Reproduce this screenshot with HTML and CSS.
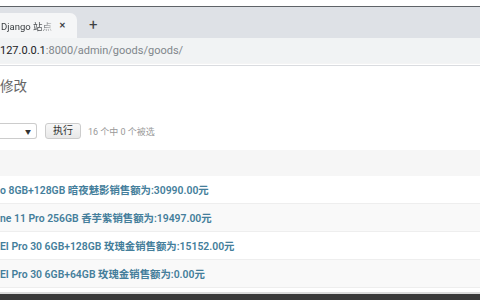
FILE: index.html
```html
<!DOCTYPE html>
<html>
<head>
<meta charset="utf-8">
<link rel="stylesheet" href="styles.css">
</head>
<body>
<div class="screen">
  <div class="topgap"></div>
  <div class="tabstrip">
    <div class="tab">
      <span class="tab-title">Django 站点</span>
      <span class="tab-close">✕</span>
    </div>
    <span class="newtab">+</span>
  </div>
  <div class="toolbar">
    <span class="url"><span class="host">127.0.0.1</span>:8000/admin/goods/goods/</span>
  </div>
  <div class="sep"></div>
  <div class="content">
    <h1 class="title">修改</h1>
    <div class="actions">
      <div class="select"><span class="caret">▼</span></div>
      <button class="go">执行</button>
      <span class="counter">16 个中 0 个被选</span>
    </div>
    <div class="table">
      <div class="thead"></div>
      <div class="row"><a class="link">o 8GB+128GB 暗夜魅影销售额为:30990.00元</a></div>
      <div class="row alt"><a class="link">ne 11 Pro 256GB 香芋紫销售额为:19497.00元</a></div>
      <div class="row"><a class="link">EI Pro 30 6GB+128GB 玫瑰金销售额为:15152.00元</a></div>
      <div class="row alt"><a class="link">EI Pro 30 6GB+64GB 玫瑰金销售额为:0.00元</a></div>
    </div>
  </div>
  <div class="bottomline"></div>
  <div class="taskbar"></div>
</div>
</body>
</html>
```
FILE: styles.css
```css
html, body {
  margin: 0;
  padding: 0;
  background: #fff;
}
.screen {
  width: 480px;
  height: 300px;
  overflow: hidden;
  display: flex;
  flex-direction: column;
  font-family: Roboto, "Noto Sans CJK SC", sans-serif;
}
.topgap {
  height: 6px;
  background: #fff;
  border-bottom: 1px solid #5f6368;
  flex: none;
}
.tabstrip {
  height: 31px;
  background: #dee1e6;
  display: flex;
  align-items: flex-end;
  flex: none;
}
.tab {
  width: 77px;
  height: 25px;
  background: #f5f6f7;
  border-top-right-radius: 7px;
  display: flex;
  align-items: center;
  box-sizing: border-box;
  padding-left: 1px;
}
.tab-title {
  font-size: 9.5px;
  color: #3c4043;
  white-space: nowrap;
  -webkit-mask-image: linear-gradient(to right, #000 72%, rgba(0,0,0,0.25) 100%);
  mask-image: linear-gradient(to right, #000 72%, rgba(0,0,0,0.25) 100%);
}
.tab-close {
  font-size: 8px;
  font-weight: bold;
  color: #3c4043;
  margin-left: 7px;
}
.newtab {
  font-size: 15px;
  color: #3c4043;
  margin-left: 12px;
  height: 25px;
  line-height: 24px;
}
.toolbar {
  height: 25px;
  background: #f1f3f4;
  display: flex;
  align-items: center;
  flex: none;
}
.url {
  font-size: 11px;
  color: #80868b;
  white-space: nowrap;
}
.host {
  color: #202124;
}
.sep {
  height: 1px;
  border-top: 1px solid #f4f4f4;
  border-bottom: 1px solid #dadce0;
  flex: none;
}
.content {
  flex: 1;
  display: flex;
  flex-direction: column;
}
.title {
  margin: 12px 0 0 0;
  font-size: 13.5px;
  font-weight: normal;
  color: #666;
  line-height: 16px;
  height: 16px;
}
.actions {
  margin-top: 29px;
  height: 16px;
  display: flex;
  align-items: center;
}
.select {
  width: 37px;
  height: 16px;
  box-sizing: border-box;
  border: 1px solid #ccc;
  border-left: none;
  border-radius: 0 3px 3px 0;
  background: #fff;
  display: flex;
  align-items: center;
  justify-content: flex-end;
  padding-right: 5px;
}
.caret {
  font-size: 6px;
  color: #333;
}
.go {
  margin: 0 0 0 8px;
  width: 36px;
  height: 16px;
  padding: 0;
  border: 1px solid #ccc;
  border-radius: 3px;
  background: linear-gradient(#f8f8f8, #e8e8e8);
  font-family: Roboto, "Noto Sans CJK SC", sans-serif;
  font-size: 10px;
  color: #333;
  line-height: 14px;
}
.counter {
  margin-left: 7px;
  font-size: 9px;
  color: #999;
}
.table {
  margin-top: 11px;
}
.thead {
  height: 26px;
  background: #f6f6f6;
}
.row {
  height: 28px;
  box-sizing: border-box;
  border-bottom: 1px solid #eee;
  background: #fff;
  display: flex;
  align-items: center;
}
.row.alt {
  background: #f9f9f9;
}
.link {
  font-size: 10.4px;
  font-weight: 600;
  color: #447e9b;
  white-space: nowrap;
}
.bottomline {
  height: 2px;
  background: #dcdcdc;
  flex: none;
}
.taskbar {
  height: 6px;
  background: #3a3a3a;
  flex: none;
}
```
